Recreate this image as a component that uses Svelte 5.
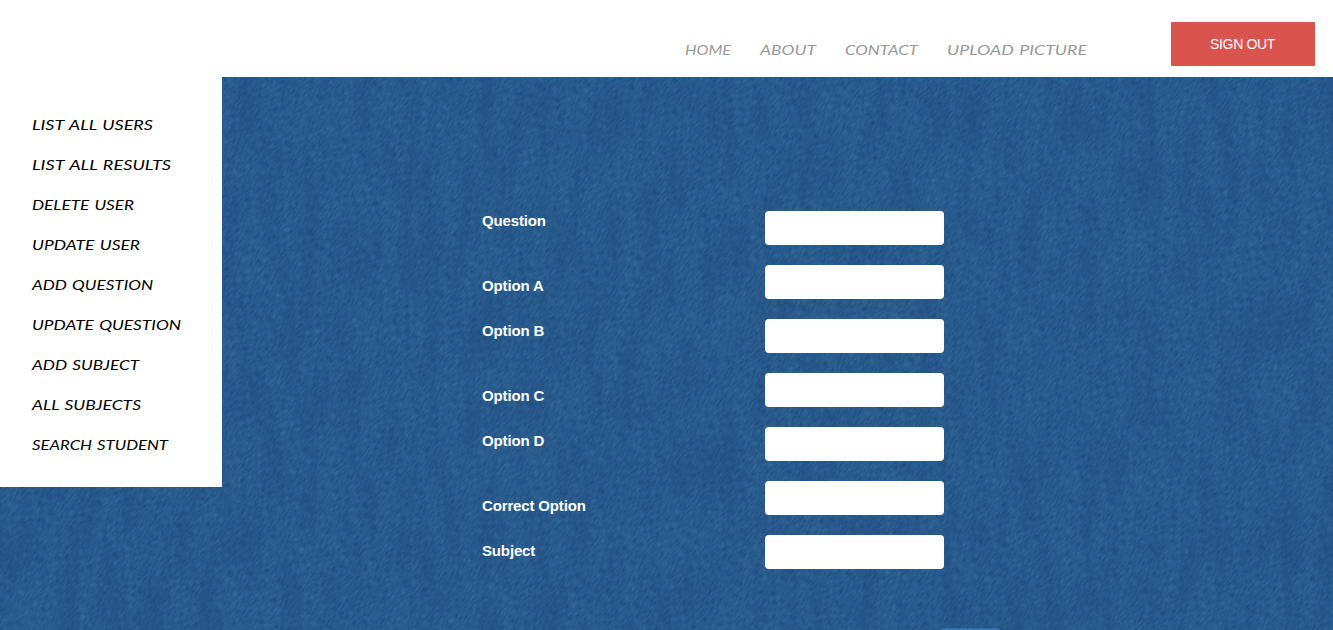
<script>
  const links = [
    { text: 'HOME', width: 46 },
    { text: 'ABOUT', width: 56 },
    { text: 'CONTACT', width: 73 },
    { text: 'UPLOAD PICTURE', width: 140 }
  ];
  const menu = [
    { text: 'LIST ALL USERS', width: 121 },
    { text: 'LIST ALL RESULTS', width: 139 },
    { text: 'DELETE USER', width: 102 },
    { text: 'UPDATE USER', width: 108 },
    { text: 'ADD QUESTION', width: 121 },
    { text: 'UPDATE QUESTION', width: 149 },
    { text: 'ADD SUBJECT', width: 107 },
    { text: 'ALL SUBJECTS', width: 109 },
    { text: 'SEARCH STUDENT', width: 136 }
  ];
  const fields = ['Question', 'Option A', 'Option B', 'Option C', 'Option D', 'Correct Option', 'Subject'];
</script>

{#snippet script(item)}
  <svg class="script" width={item.width} height="20" viewBox="0 0 {item.width} 20">
    <text x="0" y="15" textLength={item.width} lengthAdjust="spacingAndGlyphs">{item.text}</text>
  </svg>
{/snippet}

<div class="page">
  <header>
    <nav>
      {#each links as item}
        <a href="#top">{@render script(item)}</a>
      {/each}
    </nav>
    <button class="signout">SIGN OUT</button>
  </header>

  <main>
    <svg class="denim" width="1333" height="553" aria-hidden="true">
      <defs>
        <filter id="twill" x="0" y="0" width="100%" height="100%" color-interpolation-filters="sRGB">
          <feTurbulence type="fractalNoise" baseFrequency="0.16 0.55" numOctaves="2" seed="4" />
          <feColorMatrix values="0.13 0 0 0 0.098  0.16 0 0 0 0.28  0.16 0 0 0 0.473  0 0 0 0 1" />
        </filter>
        <filter id="streaks" x="0" y="0" width="100%" height="100%" color-interpolation-filters="sRGB">
          <feTurbulence type="fractalNoise" baseFrequency="0.05 0.014" numOctaves="5" seed="9" />
          <feColorMatrix values="0 0 0 0 0.11  0 0 0 0 0.26  0 0 0 0 0.48  1.8 0 0 0 -0.72" />
        </filter>
      </defs>
      <rect x="-600" y="-900" width="2600" height="2400" transform="rotate(-52 660 276)" filter="url(#twill)" />
      <rect width="1333" height="553" filter="url(#streaks)" opacity="0.4" />
    </svg>

    <aside>
      {#each menu as item}
        <a href="#top">{@render script(item)}</a>
      {/each}
    </aside>

    <form>
      <div class="labels">
        {#each fields as field}
          <label for={field}>{field}</label>
        {/each}
      </div>
      <div class="inputs">
        {#each fields as field}
          <input id={field} type="text" />
        {/each}
        <button type="button" class="submit" aria-label="Submit"></button>
      </div>
    </form>
  </main>
</div>

<style>
  :global(body) {
    margin: 0;
    overflow: hidden;
  }
  .page {
    width: 1333px;
    height: 630px;
    overflow: hidden;
    display: flex;
    flex-direction: column;
    font-family: "Liberation Sans", Arial, sans-serif;
    background: #fff;
  }
  header {
    height: 77px;
    flex: none;
    display: flex;
    justify-content: flex-end;
    align-items: flex-start;
    box-sizing: border-box;
    padding: 22px 18px 0 0;
  }
  nav {
    display: flex;
    gap: 29px;
    padding-top: 18px;
    margin-right: 84px;
    color: #999;
  }
  a {
    display: block;
    height: 20px;
    color: inherit;
    text-decoration: none;
  }
  .script {
    display: block;
    overflow: visible;
  }
  .script text {
    font: italic 14px "Lucida Handwriting", "Lucida Calligraphy", Lato, sans-serif;
    word-spacing: 1px;
    fill: currentColor;
  }
  .signout {
    width: 144px;
    height: 44px;
    padding: 0 1px 0 0;
    border: 0;
    border-radius: 1px;
    background: #d9534f;
    color: #fff;
    font: 14px "Liberation Sans", Arial, sans-serif;
    letter-spacing: -0.35px;
  }
  main {
    flex: 1;
    position: relative;
    display: flex;
    align-items: flex-start;
    overflow: hidden;
    background: #285a8c;
  }
  .denim {
    position: absolute;
    inset: 0;
  }
  aside {
    position: relative;
    width: 222px;
    height: 410px;
    box-sizing: border-box;
    padding: 38px 0 0 32px;
    display: flex;
    flex-direction: column;
    gap: 20px;
    background: #fff;
    color: #000;
  }
  form {
    position: relative;
    display: flex;
    padding: 134px 0 0 260px;
  }
  .labels {
    width: 283px;
    display: flex;
    flex-direction: column;
  }
  label {
    height: 20px;
    margin-bottom: 25px;
    font-size: 15px;
    font-weight: 700;
    line-height: 20px;
    letter-spacing: -0.15px;
    color: #fff;
  }
  label:nth-child(odd) {
    margin-bottom: 45px;
  }
  .inputs {
    display: flex;
    flex-direction: column;
    gap: 20px;
  }
  input {
    width: 179px;
    height: 34px;
    box-sizing: border-box;
    padding: 6px 12px;
    border: 0;
    border-radius: 4px;
    background: #fff;
  }
  .submit {
    width: 62px;
    height: 34px;
    margin: 39px 0 0 174px;
    border: 1px solid #2e6da4;
    border-radius: 4px;
    background: #337ab7;
  }
</style>
